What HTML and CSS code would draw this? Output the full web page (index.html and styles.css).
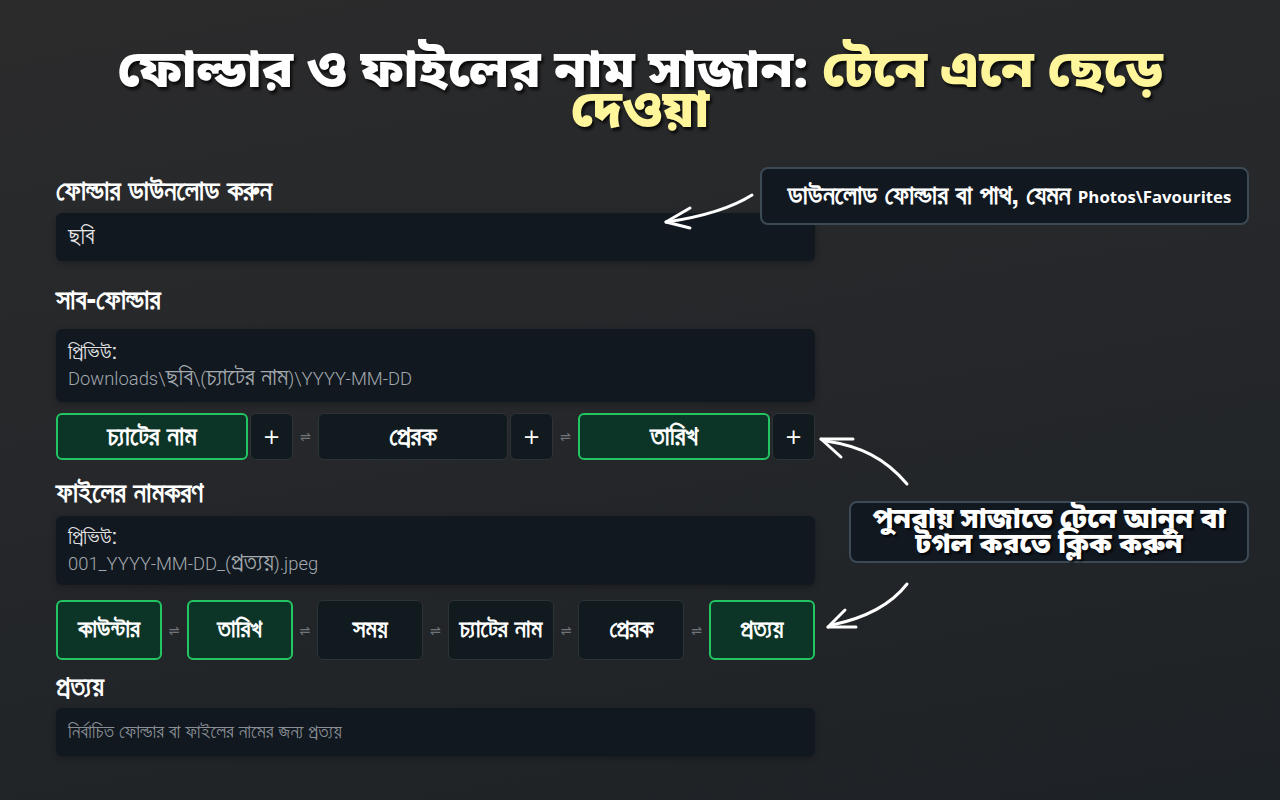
FILE: index.html
```html
<!DOCTYPE html>
<html lang="bn">
<head>
<meta charset="utf-8">
<link rel="stylesheet" href="styles.css">
</head>
<body>
<div class="page">
  <h1 class="title">ফোল্ডার ও ফাইলের নাম সাজান: <span class="hl">টেনে এনে ছেড়ে<br>দেওয়া</span></h1>

  <div class="form">
    <div class="label l1">ফোল্ডার ডাউনলোড করুন</div>
    <div class="field">ছবি</div>

    <div class="label l2">সাব-ফোল্ডার</div>
    <div class="preview">
      <div class="pv-title">প্রিভিউ:</div>
      <div class="pv-text">Downloads\<span class="bn">ছবি</span>\(<span class="bn">চ্যাটের নাম</span>)\YYYY-MM-DD</div>
    </div>

    <div class="chips1">
      <div class="chip on">চ্যাটের নাম</div>
      <div class="plus">+</div>
      <div class="swap">⇌</div>
      <div class="chip">প্রেরক</div>
      <div class="plus">+</div>
      <div class="swap">⇌</div>
      <div class="chip on">তারিখ</div>
      <div class="plus">+</div>
    </div>

    <div class="label l3">ফাইলের নামকরণ</div>
    <div class="preview p2">
      <div class="pv-title">প্রিভিউ:</div>
      <div class="pv-text">001_YYYY-MM-DD_(<span class="bn">প্রত্যয়</span>).jpeg</div>
    </div>

    <div class="chips2">
      <div class="chip on">কাউন্টার</div>
      <div class="swap">⇌</div>
      <div class="chip on">তারিখ</div>
      <div class="swap">⇌</div>
      <div class="chip">সময়</div>
      <div class="swap">⇌</div>
      <div class="chip">চ্যাটের নাম</div>
      <div class="swap">⇌</div>
      <div class="chip">প্রেরক</div>
      <div class="swap">⇌</div>
      <div class="chip on">প্রত্যয়</div>
    </div>

    <div class="label l4">প্রত্যয়</div>
    <div class="field placeholder">নির্বাচিত ফোল্ডার বা ফাইলের নামের জন্য প্রত্যয়</div>
  </div>

  <div class="tip tip1"><span class="bn">ডাউনলোড ফোল্ডার বা পাথ, যেমন</span><span class="lat">Photos\Favourites</span></div>
  <div class="tip tip2">পুনরায় সাজাতে টেনে আনুন বা<br>টগল করতে ক্লিক করুন</div>

  <svg class="arrows" width="1280" height="800" viewBox="0 0 1280 800">
    <g fill="none" stroke="#ffffff" stroke-width="3" stroke-linecap="round" stroke-linejoin="round">
      <path d="M752 195 C 730 209, 700 217, 667 222"/>
      <path d="M666 222 L 690 208"/>
      <path d="M666 222 L 690 228"/>

      <path d="M907 484 C 885 458, 860 446, 826 441"/>
      <path d="M821 439 L 853 439"/>
      <path d="M821 439 L 841 457"/>

      <path d="M907 584 C 890 606, 865 618, 832 625"/>
      <path d="M828 627 L 856 627"/>
      <path d="M828 627 L 845 610"/>
    </g>
  </svg>
</div>
</body>
</html>
```

FILE: styles.css
```css
* { box-sizing: border-box; }
html, body { margin: 0; padding: 0; }
body {
  width: 1280px;
  height: 800px;
  overflow: hidden;
  background: linear-gradient(170deg, #2b2b2c 0%, #25272a 50%, #1d2226 100%);
  font-family: "FreeSans", sans-serif;
  color: #ffffff;
}
.page {
  position: relative;
  width: 1280px;
  height: 800px;
  padding-top: 54px;
}
.title {
  margin: 0;
  text-align: center;
  font-family: "Noto Sans Bengali", "Noto Sans", sans-serif;
  font-size: 52px;
  line-height: 40px;
  font-weight: 900;
  color: #ffffff;
  text-shadow: 2px 3px 3px rgba(0,0,0,0.75);
  padding: 0 60px;
}
.hl { color: #fff59a; }

.form {
  width: 759px;
  margin-left: 56px;
  margin-top: 46px;
  display: flex;
  flex-direction: column;
}
.bn { font-family: "FreeSans", sans-serif; }
.lat { font-family: "Open Sans", sans-serif; }

.label {
  font-size: 28px;
  font-weight: 700;
  line-height: 24px;
  color: #ffffff;
}
.l1 { margin-bottom: 9px; }
.l2 { margin-top: 28px; margin-bottom: 16px; }
.l3 { margin-top: 22px; margin-bottom: 10px; }
.l4 { margin-top: 16px; margin-bottom: 8px; }

.field {
  height: 48px;
  background: #111820;
  border-radius: 6px;
  padding: 0 12px;
  display: flex;
  align-items: center;
  font-size: 24px;
  color: #e6e6e6;
  box-shadow: 0 2px 6px rgba(0,0,0,0.25);
}
.placeholder { color: #8a8f94; font-size: 19.5px; }

.preview {
  height: 73px;
  background: #111820;
  border-radius: 6px;
  padding: 8px 12px;
  display: flex;
  flex-direction: column;
  justify-content: center;
  gap: 4px;
  box-shadow: 0 2px 6px rgba(0,0,0,0.25);
}
.p2 { height: 69px; }
.pv-title { font-size: 22px; color: #e0e0e0; line-height: 22px; }
.pv-text {
  font-family: Roboto, "Open Sans", sans-serif;
  font-size: 18.4px;
  font-weight: 300;
  color: #a3a8ad;
  line-height: 22px;
}
.pv-text .bn { font-size: 25px; font-weight: 400; }

.chips1 {
  margin-top: 11px;
  height: 47px;
  display: flex;
  align-items: stretch;
  gap: 2px;
}
.chips1 .chip { flex: 1; font-size: 27px; }
.chips1 .plus { width: 43px; }
.chips1 .swap { width: 21px; }

.chips2 {
  margin-top: 15px;
  height: 60px;
  display: flex;
  align-items: stretch;
}
.chips2 .chip { width: 106px; flex: none; font-size: 25px; }
.chips2 .swap { flex: 1; }

.chip {
  display: flex;
  align-items: center;
  justify-content: center;
  background: #111a1e;
  border: 1px solid #2d3337;
  border-radius: 6px;
  font-weight: 700;
  color: #ffffff;
}
.chip.on {
  background: #0c3528;
  border: 2px solid #22c562;
}
.plus {
  display: flex;
  align-items: center;
  justify-content: center;
  background: #111a1e;
  border: 1px solid #2d3337;
  border-radius: 6px;
  font-size: 21px;
  font-weight: 400;
  color: #ffffff;
  font-family: "DejaVu Sans", sans-serif;
}
.swap {
  display: flex;
  align-items: center;
  justify-content: center;
  color: #70757a;
  font-size: 13px;
  font-family: "DejaVu Sans", sans-serif;
}

.tip {
  position: absolute;
  background: #111820;
  border: 2px solid #3b4a55;
  border-radius: 8px;
  color: #ffffff;
  font-weight: 700;
  display: flex;
  align-items: center;
  justify-content: center;
  text-align: center;
}
.tip1 {
  left: 760px;
  top: 167px;
  width: 489px;
  height: 58px;
  gap: 7px;
  padding-left: 10px;
}
.tip1 .bn { font-size: 27.5px; }
.tip1 .lat { font-size: 16.8px; }
.tip2 {
  left: 849px;
  top: 501px;
  width: 400px;
  height: 62px;
  font-family: "Noto Sans Bengali", "Noto Sans", sans-serif;
  font-weight: 900;
  font-size: 28px;
  line-height: 25px;
  text-shadow: 2px 2px 2px rgba(0,0,0,0.8);
  padding-top: 2px;
}
.arrows {
  position: absolute;
  left: 0;
  top: 0;
  pointer-events: none;
}
```
